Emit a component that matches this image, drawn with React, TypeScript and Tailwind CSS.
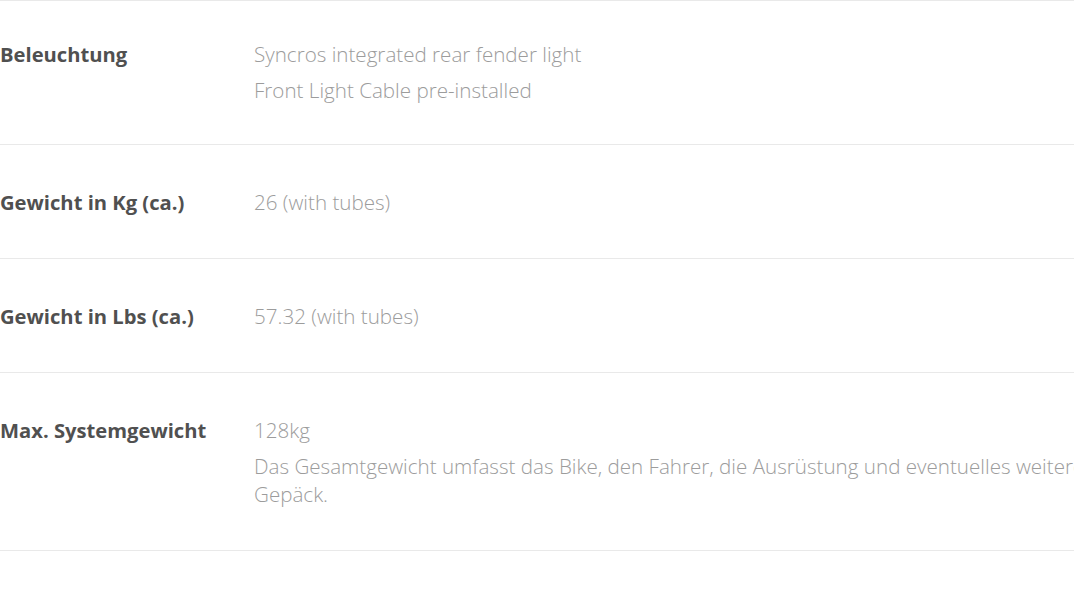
import React from "react";

const rows: { label: string; values: string[]; pt: string; pb: string }[] = [
  {
    label: "Beleuchtung",
    values: ["Syncros integrated rear fender light", "Front Light Cable pre-installed"],
    pt: "pt-[39px]",
    pb: "pb-[40px]",
  },
  { label: "Gewicht in Kg (ca.)", values: ["26 (with tubes)"], pt: "pt-[43px]", pb: "pb-[42px]" },
  { label: "Gewicht in Lbs (ca.)", values: ["57.32 (with tubes)"], pt: "pt-[43px]", pb: "pb-[42px]" },
  {
    label: "Max. Systemgewicht",
    values: [
      "128kg",
      "Das Gesamtgewicht umfasst das Bike, den Fahrer, die Ausrüstung und eventuelles weiteres Gepäck.",
    ],
    pt: "pt-[43px]",
    pb: "pb-[42px]",
  },
];

export default function App() {
  return (
    <div
      className="w-[1074px] h-[608px] overflow-hidden bg-white"
      style={{ fontFamily: '"Open Sans", "Noto Sans", sans-serif' }}
    >
      <div className="w-[1140px] border-t border-[#e9e9e9]">
        {rows.map((r) => (
          <div
            key={r.label}
            className={`grid grid-cols-[254px_1fr] border-b border-[#e9e9e9] ${r.pt} ${r.pb}`}
          >
            <div className="text-[20.2px] leading-[28px] font-bold text-[#505050]">{r.label}</div>
            <div className="flex flex-col gap-[8px] pr-[10px]">
              {r.values.map((v) => (
                <p key={v} className="text-[20.6px] leading-[28px] font-light text-[#9c9c9c]">
                  {v}
                </p>
              ))}
            </div>
          </div>
        ))}
      </div>
    </div>
  );
}
